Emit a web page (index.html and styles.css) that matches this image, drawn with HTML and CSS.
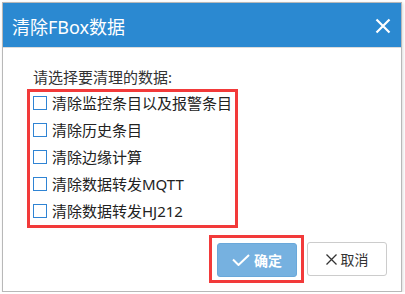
FILE: index.html
```html
<!DOCTYPE html>
<html>
<head>
    <meta charset="utf-8">
    <title>清除FBox数据</title>
    <link rel="stylesheet" href="styles.css">
</head>
<body>
    <div class="dialog">
        <div class="dialog-header">
            <span class="dialog-title">清除FBox数据</span>
            <button class="close-btn" title="关闭">
                <svg width="16" height="16" viewBox="0 0 16 16">
                    <path d="M1.5 1.5 L14.5 14.5 M14.5 1.5 L1.5 14.5" stroke="#fff" stroke-width="2.2" fill="none"/>
                </svg>
            </button>
        </div>

        <div class="dialog-body">
            <div class="prompt">请选择要清理的数据:</div>
            <!-- 选项列表 -->
            <div class="options mark">
                <label class="option"><span class="check"></span>清除监控条目以及报警条目</label>
                <label class="option"><span class="check"></span>清除历史条目</label>
                <label class="option"><span class="check"></span>清除边缘计算</label>
                <label class="option"><span class="check"></span>清除数据转发MQTT</label>
                <label class="option"><span class="check"></span>清除数据转发HJ212</label>
            </div>
        </div>

        <div class="dialog-footer">
            <div class="ok-wrap mark">
                <button class="btn btn-primary" disabled>
                    <svg width="18" height="12" viewBox="0 0 18 12">
                        <path d="M1 5.5 L6.5 11 L17 1" stroke="#fff" stroke-width="2" fill="none"/>
                    </svg>
                    确定
                </button>
            </div>
            <button class="btn btn-default">
                <svg width="11" height="11" viewBox="0 0 11 11">
                    <path d="M0.5 0.5 L10.5 10.5 M10.5 0.5 L0.5 10.5" stroke="#333" stroke-width="1.3" fill="none"/>
                </svg>
                取消
            </button>
        </div>
    </div>
</body>
</html>
```

FILE: styles.css
```css
body {
    margin: 0;
    padding: 2px 0 0 2px;
    font-family: "Noto Sans", "Noto Sans CJK SC", sans-serif;
    background-color: #fff;
}

.dialog {
    width: 398px;
    border: 1px solid #b8b8b8;
    background: #fff;
    box-shadow: 1px 1px 3px rgba(0,0,0,0.15);
}

.dialog-header {
    height: 44px;
    background: #2b89d1;
    border-bottom: 1px solid #dcdcdc;
    display: flex;
    align-items: center;
    justify-content: space-between;
    padding: 0 8px 0 9px;
}

.dialog-title {
    color: #fff;
    font-size: 18px;
    margin-top: 2px;
}

.close-btn {
    background: none;
    border: none;
    padding: 0;
    width: 20px;
    height: 20px;
    display: flex;
    align-items: center;
    justify-content: center;
    cursor: pointer;
    margin-top: 2px;
}

.dialog-body {
    padding: 18px 0 0 24px;
}

.prompt {
    font-size: 15px;
    line-height: 22px;
    color: #333;
    padding-left: 6px;
    margin-bottom: 1px;
}

.mark {
    border: 3px solid #f23a3a;
}

.options {
    display: inline-flex;
    flex-direction: column;
    gap: 5px;
    padding: 0 3px 3px 3px;
}

.option {
    display: flex;
    align-items: center;
    font-size: 15px;
    line-height: 22px;
    color: #222;
    cursor: pointer;
}

.check {
    width: 12px;
    height: 12px;
    border: 1px solid #2f84d4;
    background: #fff;
    margin-right: 5px;
}

.dialog-footer {
    display: flex;
    justify-content: flex-end;
    align-items: center;
    gap: 3px;
    margin-top: 7px;
    padding: 0 14px 8px 0;
}

.ok-wrap {
    padding: 5px 4px 3px 5px;
}

.btn {
    width: 80px;
    height: 34px;
    border-radius: 3px;
    font-family: "Noto Sans CJK SC", sans-serif;
    font-size: 14px;
    display: flex;
    align-items: center;
    justify-content: center;
    gap: 4px;
    padding: 0;
    cursor: pointer;
}

.btn-primary {
    background: #76b1e0;
    border: 1px solid #6aa8da;
    color: #fff;
    font-weight: bold;
}

.btn-default {
    background: #fff;
    border: 1px solid #ccc;
    color: #333;
}
```
